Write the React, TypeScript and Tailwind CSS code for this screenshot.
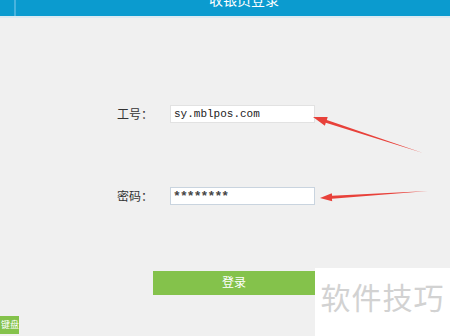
import React from 'react';

const cjk = { fontFamily: '"Noto Sans CJK SC", "Noto Sans", sans-serif' };

export default function App() {
  return (
    <div className="relative w-[450px] h-[336px] overflow-hidden bg-[#f0f0f0]" style={cjk}>
      {/* Header */}
      <div className="flex h-[16px] bg-[#0b9bcf] overflow-hidden">
        <div className="w-[14px]" />
        <div className="w-[2px] bg-[#48b3de]" />
        <div className="flex-1 flex justify-center pl-[22px]">
          <span className="text-[14px] leading-[14px] -mt-[8px] text-white">收银员登录</span>
        </div>
      </div>
      <div className="h-[2px] bg-[#dbeaf2]" />

      {/* Form */}
      <div className="flex flex-col pt-[87px]">
        <div className="flex items-center pl-[117px]">
          <span className="w-[53px] text-[12px] text-[#333]">工号：</span>
          <div className="w-[145px] h-[18px] bg-white border border-[#e2e2e2] flex items-center pl-[3px]">
            <span className="text-[11px] text-[#222]" style={{ fontFamily: '"Liberation Mono", monospace' }}>sy.mblpos.com</span>
          </div>
        </div>
        <div className="flex items-center pl-[117px] mt-[64px]">
          <span className="w-[53px] text-[12px] text-[#333]">密码：</span>
          <div className="w-[145px] h-[18px] bg-white border border-[#c9d4df] flex items-center pl-[2px] pt-[2px]">
            <span className="text-[13px] font-bold text-[#444] tracking-[-0.9px]" style={{ fontFamily: '"Liberation Mono", monospace' }}>********</span>
          </div>
        </div>
        <div className="pl-[153px] mt-[66px]">
          <button className="w-[162px] h-[24px] bg-[#84c24b] text-white text-[12px] flex items-center justify-center pb-[3px]">登录</button>
        </div>
      </div>

      {/* Watermark */}
      <div className="absolute left-[315px] top-[268px] w-[135px] h-[68px] bg-white flex justify-center pt-[8px]">
        <span className="text-[30px] leading-[40px] text-[#d2d2d2] tracking-[1px]">软件技巧</span>
      </div>

      {/* Keyboard tab */}
      <div className="absolute left-0 top-[316px] w-[19px] h-[18px] bg-[#84c24b] flex items-center justify-end overflow-hidden">
        <span className="text-[9px] text-white whitespace-nowrap">键盘</span>
      </div>

      {/* Annotation arrows */}
      <svg className="absolute left-0 top-0 pointer-events-none" width="450" height="336" viewBox="0 0 450 336">
        <polygon
          fill="#e8413a"
          points="423,153 325.8,122.8 324.9,125.7 313,117 327.7,117.1 326.8,120.0"
        />
        <polygon
          fill="#e8413a"
          points="428,191 331.9,198.8 332.2,201.3 320,198 331.8,193.3 332.1,195.8"
        />
      </svg>
    </div>
  );
}
